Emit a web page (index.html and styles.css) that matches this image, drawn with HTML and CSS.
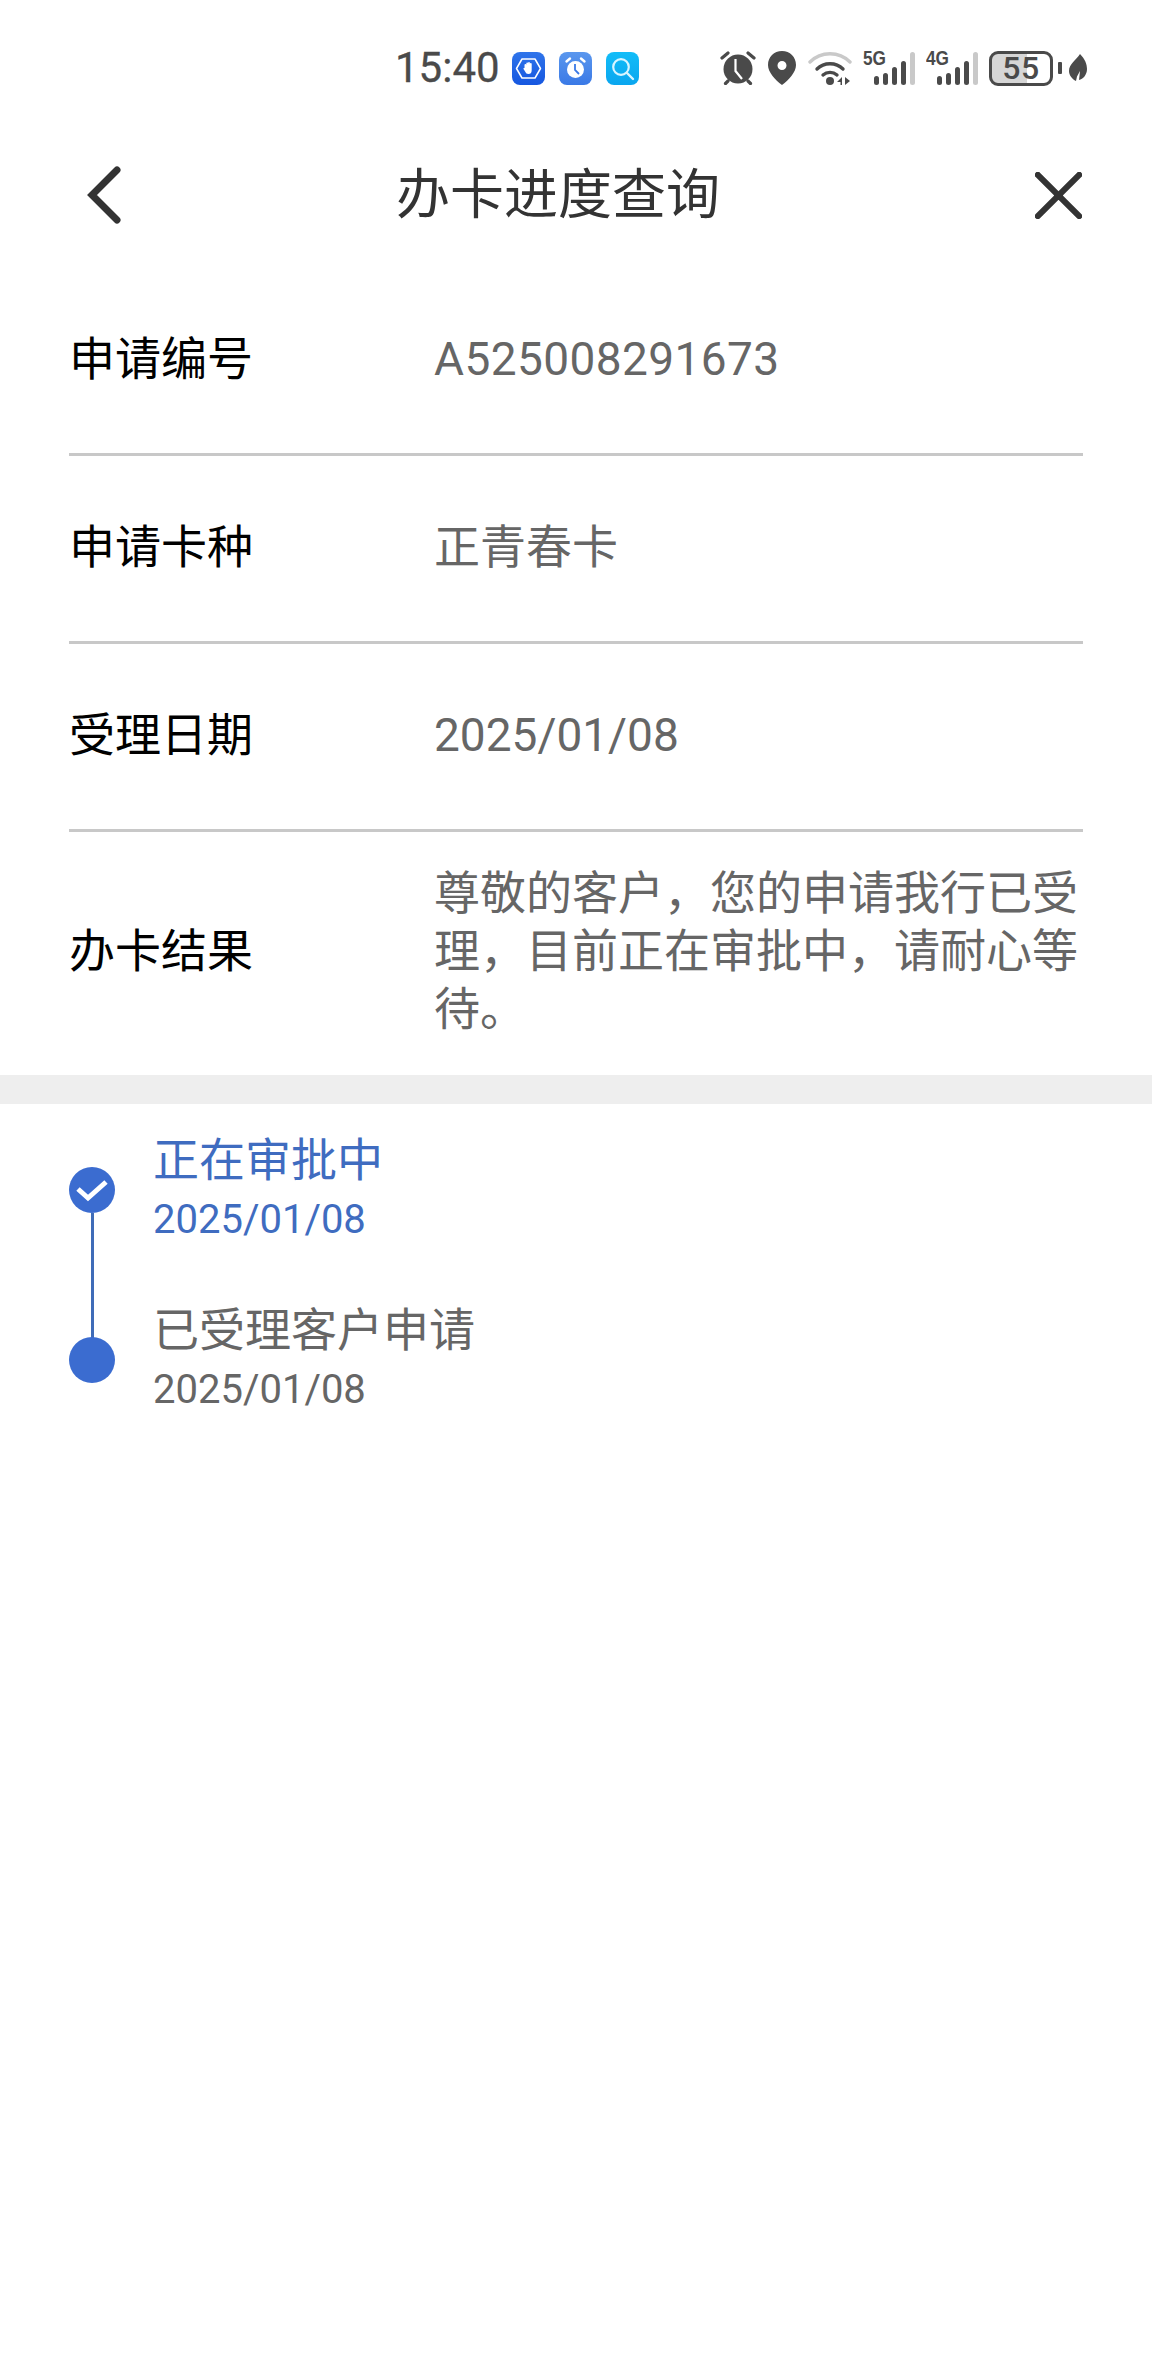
FILE: index.html
```html
<!DOCTYPE html>
<html lang="zh-CN">
<head>
<meta charset="utf-8">
<title>办卡进度查询</title>
<link rel="stylesheet" href="styles.css">
</head>
<body>
<div class="page">
  <div class="status">
    <span class="time">15:40</span>
    <div class="apps">
      <svg class="app" viewBox="0 0 33 33"><defs><linearGradient id="g1" x1="0" y1="0" x2="0" y2="1"><stop offset="0" stop-color="#2f74ea"/><stop offset="1" stop-color="#1657e0"/></linearGradient></defs><rect width="33" height="33" rx="8" fill="url(#g1)"/><path d="M10 7h13l5.500 9.500L23 26H10L4.500 16.500z" fill="none" stroke="#fff" stroke-width="1.500" stroke-linejoin="round"/><path d="M12.500 17v-4a.9.9 0 0 1 1.800 0v-1.500a.9.9 0 0 1 1.800 0v-.5a.9.9 0 0 1 1.800 0v1a.9.9 0 0 1 1.800 0v6c0 3-1.300 4-3.300 4-1.700 0-2.500-.8-3.300-2.500l-1.600-2.500c-.4-.9.800-1.500 2-.5z" fill="#fff"/></svg>
      <svg class="app" viewBox="0 0 33 33"><defs><linearGradient id="g2" x1="0" y1="0" x2="0" y2="1"><stop offset="0" stop-color="#5a97ee"/><stop offset="1" stop-color="#3a79e6"/></linearGradient></defs><rect width="33" height="33" rx="8" fill="url(#g2)"/><circle cx="16.500" cy="17.500" r="8.500" fill="#fff"/><path d="M7.500 9.500l3.500-3M25.500 9.500l-3.500-3" stroke="#fff" stroke-width="2.400" stroke-linecap="round"/><path d="M16 12v6l4 4" fill="none" stroke="#3a79e6" stroke-width="1.800"/></svg>
      <svg class="app" viewBox="0 0 33 33"><defs><linearGradient id="g3" x1="0" y1="0" x2="0" y2="1"><stop offset="0" stop-color="#12bdf8"/><stop offset="1" stop-color="#0aa6ef"/></linearGradient></defs><rect width="33" height="33" rx="8" fill="url(#g3)"/><circle cx="15" cy="15" r="7.800" fill="none" stroke="#d8f5ff" stroke-width="2.200"/><path d="M21 21l6 6" stroke="#d8f5ff" stroke-width="2.400" stroke-linecap="round"/></svg>
    </div>
    <div class="sys">
      <svg class="s-alarm" viewBox="0 0 36 34"><circle cx="18" cy="18" r="14.500" fill="#4a4a4a"/><path d="M2 7l6-5M34 7l-6-5M8 30l-2.500 2.500M28 30l2.500 2.500" stroke="#4a4a4a" stroke-width="3.200" stroke-linecap="round"/><path d="M15.500 8v12l6.500 8" fill="none" stroke="#fff" stroke-width="2.200"/></svg>
      <svg class="s-pin" viewBox="0 0 28 34"><path fill-rule="evenodd" d="M14 0c8 0 14 6 14 14 0 7-7 15-14 20C7 29 0 21 0 14 0 6 6 0 14 0zm0 10a4.500 4.500 0 1 0 0 9 4.500 4.500 0 0 0 0-9z" fill="#4a4a4a"/></svg>
      <svg class="s-wifi" viewBox="0 0 44 34"><path d="M2 11C13 0 31 0 42 11" fill="none" stroke="#c9c9c9" stroke-width="3.400" stroke-linecap="round"/><path d="M9 18c7-7 19-7 26 0" fill="none" stroke="#4a4a4a" stroke-width="3.400" stroke-linecap="round"/><path d="M15 24c4-3.500 10-3.500 14 0" fill="none" stroke="#4a4a4a" stroke-width="3.400" stroke-linecap="round"/><circle cx="22" cy="30" r="4" fill="#4a4a4a"/><path d="M34 26v8h-1.500v-3H29zM37 26l5 4-5 4z" fill="#4a4a4a"/></svg>
      <div class="sig"><span class="net">5G</span><i class="b b1"></i><i class="b b2"></i><i class="b b3"></i><i class="b b4"></i><i class="b b5"></i></div>
      <div class="sig"><span class="net">4G</span><i class="b b1"></i><i class="b b2"></i><i class="b b3"></i><i class="b b4"></i><i class="b b5"></i></div>
      <div class="batt"><span class="batt-num">55</span></div>
      <i class="nib"></i>
      <svg class="s-leaf" viewBox="0 0 18 28"><path d="M11 0c5 5 7 10 7 15 0 6-4 10-8 11l1-9-3 5.500L7 27C3 25 0 21 0 17 0 10 7 6 11 0z" fill="#4a4a4a"/></svg>
    </div>
  </div>

  <header class="nav">
    <svg class="nav-back" viewBox="0 0 36 58"><path d="M31 4L6 29l25 25" fill="none" stroke="#333" stroke-width="7" stroke-linecap="round" stroke-linejoin="miter"/></svg>
    <h1 class="nav-title">办卡进度查询</h1>
    <svg class="nav-close" viewBox="0 0 50 50"><path d="M3 3l44 44M47 3L3 47" fill="none" stroke="#333" stroke-width="6.500" stroke-linecap="round"/></svg>
  </header>

  <section class="info">
    <div class="row row-first"><span class="label">申请编号</span><span class="value value-code">A525008291673</span></div>
    <div class="row"><span class="label">申请卡种</span><span class="value">正青春卡</span></div>
    <div class="row"><span class="label">受理日期</span><span class="value">2025/01/08</span></div>
    <div class="row row-last"><span class="label">办卡结果</span><span class="value">尊敬的客户，您的申请我行已受理，目前正在审批中，请耐心等待。</span></div>
  </section>

  <div class="band"></div>

  <section class="timeline">
    <div class="step step-active">
      <div class="marker"><svg class="dot-svg" viewBox="0 0 46 46"><circle cx="23" cy="23" r="23" fill="#3b6cd0"/><path d="M9 22l10 9 18-16" fill="none" stroke="#fff" stroke-width="5"/></svg></div>
      <div class="step-text"><div class="step-title">正在审批中</div><div class="step-date">2025/01/08</div></div>
    </div>
    <div class="step">
      <div class="marker"><span class="dot"></span></div>
      <div class="step-text"><div class="step-title">已受理客户申请</div><div class="step-date">2025/01/08</div></div>
    </div>
  </section>
</div>
</body>
</html>
```
FILE: styles.css
```css
* { box-sizing: border-box; }
html, body { margin: 0; padding: 0; background: #fff; }
body { font-family: Roboto, "Noto Sans CJK SC", sans-serif; }
.page { width: 1152px; height: 2376px; overflow: hidden; background: #fff; }

.status { height: 129px; padding: 50px 65px 0 395px; display: flex; align-items: flex-start; }
.time { font-size: 42px; line-height: 36px; color: #4a4a4a; width: 117px; -webkit-text-stroke: .3px #4a4a4a; }
.apps { display: flex; gap: 14px; }
.app { width: 33px; height: 33px; display: block; margin-top: 2px; }
.sys { margin-left: 81px; display: flex; align-items: center; height: 36px; }
.s-alarm { width: 36px; height: 34px; margin-right: 12px; }
.s-pin { width: 28px; height: 34px; margin-right: 12px; }
.s-wifi { width: 44px; height: 34px; margin-right: 11px; }
.sig { position: relative; width: 52px; height: 34px; margin-right: 11px; display: flex; align-items: flex-end; justify-content: flex-end; gap: 4px; }
.net { position: absolute; left: 0; top: -4px; font-family: "Liberation Sans", sans-serif; font-weight: 700; font-size: 21px; line-height: 22px; color: #4a4a4a; transform: scaleX(.82); transform-origin: left center; }
.b { display: block; width: 5px; background: #4a4a4a; border-radius: 3px; }
.b1 { height: 9px; } .b2 { height: 12px; } .b3 { height: 18px; } .b4 { height: 24px; }
.b5 { height: 33px; background: #c9c9c9; }
.batt { width: 64px; height: 35px; border: 3px solid #4a4a4a; border-radius: 9px; background: linear-gradient(90deg, #d6d6d6 60%, #fff 60%); display: flex; align-items: center; justify-content: center; }
.batt-num { font-size: 32px; font-weight: 500; line-height: 30px; color: #4a4a4a; letter-spacing: .5px; }
.nib { width: 4px; height: 12px; background: #4a4a4a; border-radius: 1px; margin: 0 7px 0 5px; }
.s-leaf { width: 18px; height: 28px; }

.nav { height: 138px; padding: 0 70px 0 86px; display: flex; align-items: center; justify-content: space-between; position: relative; }
.nav-back { width: 36px; height: 58px; margin-top: -6px; }
.nav-title { margin: 0; font-size: 54px; font-weight: 400; color: #333; line-height: 70px; position: absolute; left: 396px; top: 32px; }
.nav-close { width: 47px; height: 47px; margin-top: -6px; }

.info { padding: 0 69px; }
.row { height: 188px; display: grid; grid-template-columns: 365px 1fr; align-items: center; border-bottom: 3px solid #c8c8c8; padding-bottom: 4px; }
.row.row-first { height: 189px; padding-bottom: 2px; }
.label { font-size: 46px; color: #000; line-height: 58px; }
.value { font-size: 46px; color: #666; line-height: 58px; }
.value-code { letter-spacing: .4px; }
.row.row-last { height: 243px; border-bottom: 0; padding-bottom: 6px; }

.band { height: 29px; background: #eeeeee; }

.timeline { padding: 25px 0 0 69px; }
.step { display: flex; height: 170px; }
.marker { width: 46px; margin-right: 38px; padding-top: 38px; position: relative; }
.dot-svg { width: 46px; height: 46px; display: block; }
.dot { display: block; width: 46px; height: 46px; border-radius: 50%; background: #3b6cd0; }
.step-active .marker::after { content: ""; position: absolute; left: 21.500px; top: 84px; width: 3px; height: 126px; background: #3f6cb8; }
.step-title { font-size: 46px; line-height: 62px; color: #666; }
.step-date { font-size: 40px; line-height: 58px; color: #666; }
.step-active .step-title, .step-active .step-date { color: #3f6cc0; }
```
